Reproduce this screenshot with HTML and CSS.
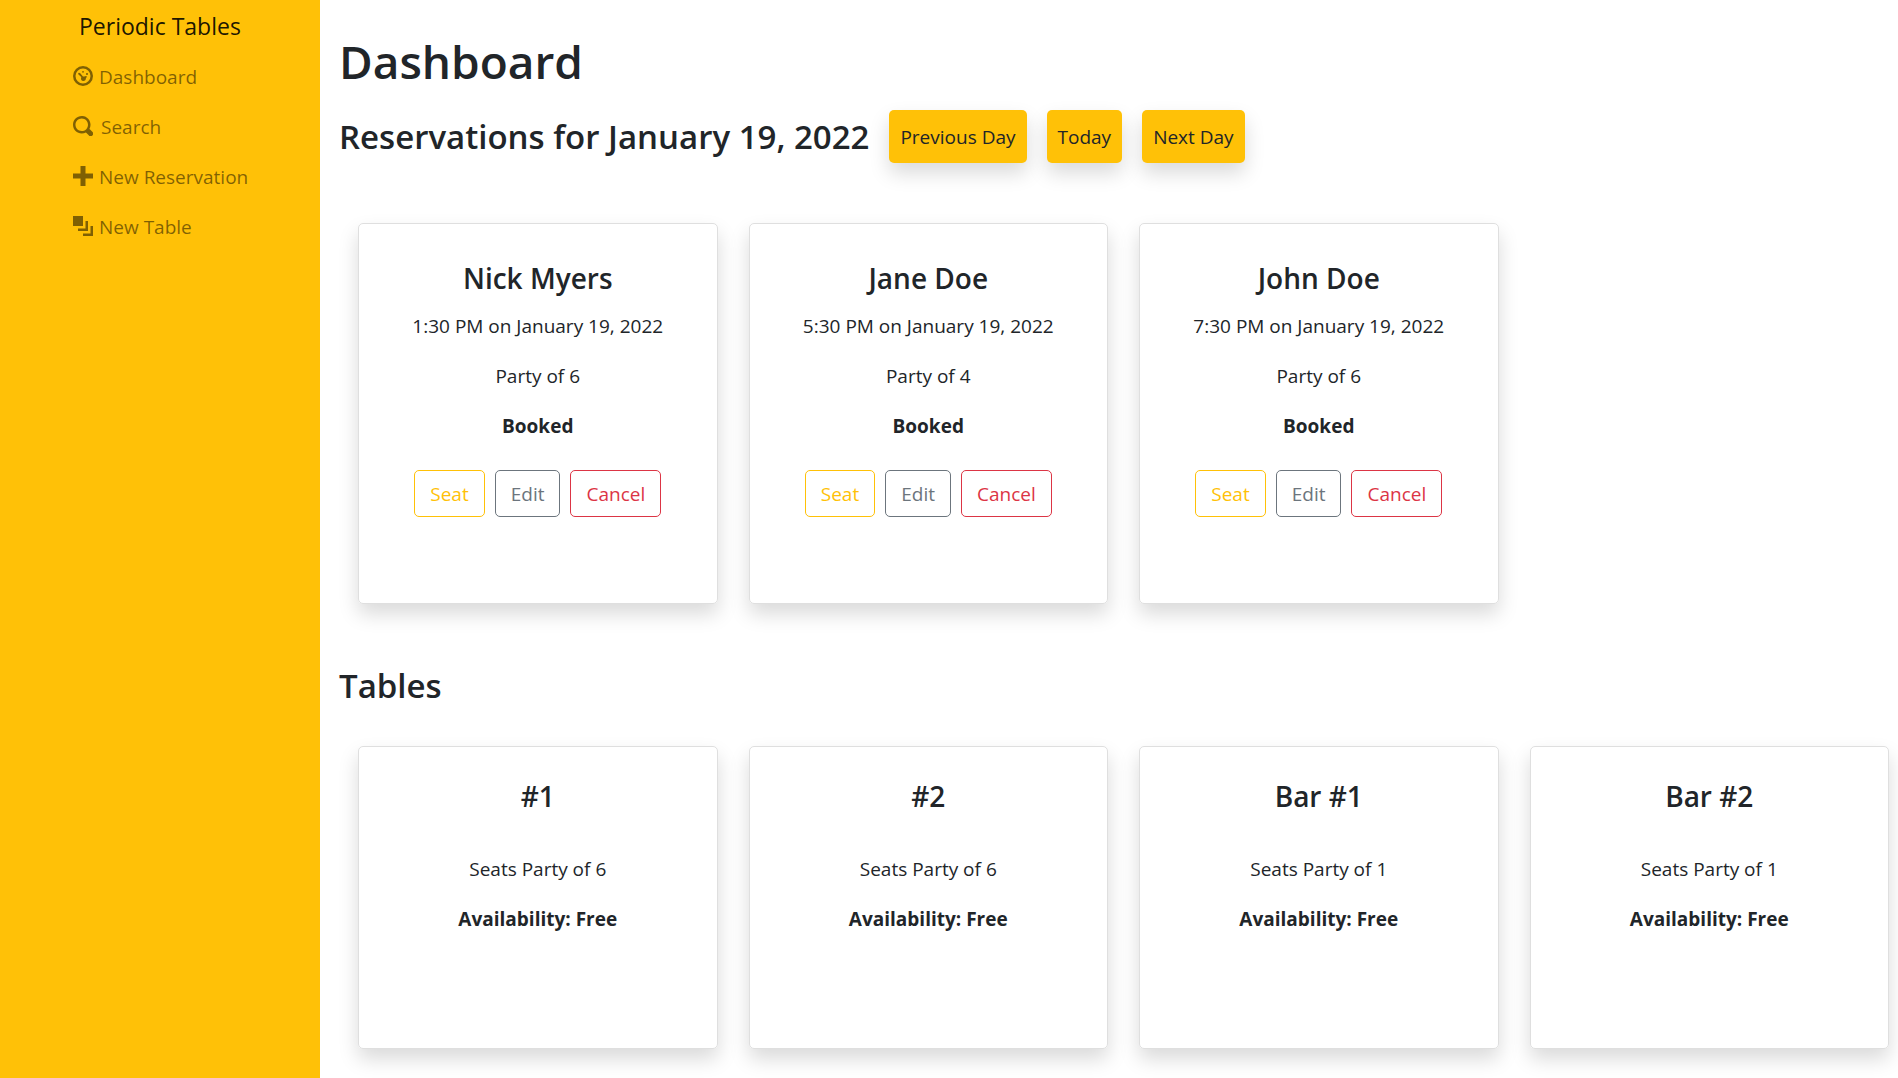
FILE: index.html
```html
<!DOCTYPE html>
<html lang="en">
<head>
<meta charset="utf-8">
<meta name="viewport" content="width=device-width, initial-scale=1">
<title>Periodic Tables</title>
<link rel="stylesheet" href="styles.css">
</head>
<body>
<div class="layout">
  <nav class="sidebar">
    <a class="brand" href="#">Periodic Tables</a>
    <ul class="menu">
      <li><a class="menu-link" href="#"><svg class="icon" viewBox="0 0 8 8" aria-hidden="true"><circle cx="4" cy="4" r="3.5" fill="none" stroke="currentColor" stroke-width="1"/><circle cx="4" cy="2.3" r=".35"/><circle cx="5.6" cy="3.2" r=".42"/><path d="M2.3 2.7c-.35.2-.3.5-.1.7l1.1 1c-.3 1 .1 1.6.85 1.6.65 0 1-.45 1-1 0-.3.5-.6.3-.95-.3-.25-.75.15-1 .1-.25 0-.3 0-.45.05l-1.1-1.35c-.15-.15-.4-.25-.6-.15z"/></svg>Dashboard</a></li>
      <li><a class="menu-link menu-link-search" href="#"><svg class="icon" viewBox="0 0 8 8" aria-hidden="true"><path d="M3.5 0c-1.93 0-3.5 1.57-3.5 3.5s1.57 3.5 3.5 3.5c.59 0 1.17-.14 1.66-.41a1 1 0 0 0 .13.13l1 1a1.02 1.02 0 1 0 1.44-1.44l-1-1a1 1 0 0 0-.16-.13c.27-.49.44-1.06.44-1.66 0-1.93-1.55-3.5-3.5-3.5zm.03 1c1.39 0 2.47 1.1 2.47 2.5 0 .66-.24 1.27-.66 1.72l-.03.03a1 1 0 0 0-.13.13c-.44.4-1.04.63-1.69.63-1.39 0-2.5-1.11-2.5-2.5s1.11-2.5 2.5-2.5z"/></svg>Search</a></li>
      <li><a class="menu-link" href="#"><svg class="icon" viewBox="0 0 8 8" aria-hidden="true"><path d="M3 0v3h-3v2h3v3h2v-3h3v-2h-3v-3h-2z"/></svg>New Reservation</a></li>
      <li><a class="menu-link" href="#"><svg class="icon" viewBox="0 0 8 8" aria-hidden="true"><path d="M0 0v4h4v-4h-4zm5 2v3h-3v1h4v-4h-1zm2 2v3h-3v1h4v-4h-1z"/></svg>New Table</a></li>
    </ul>
  </nav>
  <main class="content">
    <h1>Dashboard</h1>
    <div class="day-bar">
      <h2>Reservations for January 19, 2022</h2>
      <button class="day-button" type="button">Previous Day</button>
      <button class="day-button" type="button">Today</button>
      <button class="day-button" type="button">Next Day</button>
    </div>
    <section class="cards" aria-label="Reservations">
      <article class="card reservation">
        <h3>Nick Myers</h3>
        <p>1:30 PM on January 19, 2022</p>
        <p>Party of 6</p>
        <p class="status">Booked</p>
        <div class="actions">
          <button class="action seat" type="button">Seat</button>
          <button class="action edit" type="button">Edit</button>
          <button class="action cancel" type="button">Cancel</button>
        </div>
      </article>
      <article class="card reservation">
        <h3>Jane Doe</h3>
        <p>5:30 PM on January 19, 2022</p>
        <p>Party of 4</p>
        <p class="status">Booked</p>
        <div class="actions">
          <button class="action seat" type="button">Seat</button>
          <button class="action edit" type="button">Edit</button>
          <button class="action cancel" type="button">Cancel</button>
        </div>
      </article>
      <article class="card reservation">
        <h3>John Doe</h3>
        <p>7:30 PM on January 19, 2022</p>
        <p>Party of 6</p>
        <p class="status">Booked</p>
        <div class="actions">
          <button class="action seat" type="button">Seat</button>
          <button class="action edit" type="button">Edit</button>
          <button class="action cancel" type="button">Cancel</button>
        </div>
      </article>
    </section>
    <h2 class="tables-title">Tables</h2>
    <section class="cards" aria-label="Tables">
      <article class="card table-card">
        <h3>#1</h3>
        <p>Seats Party of 6</p>
        <p class="status">Availability: Free</p>
      </article>
      <article class="card table-card">
        <h3>#2</h3>
        <p>Seats Party of 6</p>
        <p class="status">Availability: Free</p>
      </article>
      <article class="card table-card">
        <h3>Bar #1</h3>
        <p>Seats Party of 1</p>
        <p class="status">Availability: Free</p>
      </article>
      <article class="card table-card">
        <h3>Bar #2</h3>
        <p>Seats Party of 1</p>
        <p class="status">Availability: Free</p>
      </article>
    </section>
  </main>
</div>
</body>
</html>
```
FILE: styles.css
```css
*, *::before, *::after { box-sizing: border-box; }

body {
  margin: 0;
  background: #fff;
  color: #212529;
  font-family: "Segoe UI", "Open Sans", "Noto Sans", sans-serif;
  font-size: 19px;
  line-height: 30px;
}

h1, h2, h3, p, ul { margin: 0; }
h1, h2, h3 { font-weight: 600; }
h1 { font-size: 46px; line-height: 60px; }
h2 { font-size: 33px; line-height: 42px; }
h3 { font-size: 28px; line-height: 36px; }
button { font: inherit; cursor: pointer; }

.layout { display: flex; min-height: 100vh; }

.sidebar {
  flex: 0 0 320px;
  padding: 5px 0 0 73px;
  background: #ffc107;
}

.brand {
  display: block;
  padding-left: 6px;
  color: rgba(0, 0, 0, 0.9);
  font-size: 23px;
  line-height: 42px;
  text-decoration: none;
}

.menu { padding: 5px 0 0; list-style: none; }

.menu-link {
  display: flex;
  align-items: center;
  gap: 6px;
  height: 50px;
  color: rgba(0, 0, 0, 0.5);
  text-decoration: none;
}

.menu-link-search { gap: 8px; }
.icon { width: 20px; height: 20px; margin-bottom: 2px; fill: currentColor; }

.content { flex: 1; min-width: 0; padding: 31px 9px 29px 19px; }

.day-bar {
  display: flex;
  flex-wrap: wrap;
  align-items: center;
  gap: 20px;
  margin: 19px 0 60px;
}

.day-button {
  min-height: 53px;
  padding: 11px;
  border: 0;
  border-radius: 5px;
  background: #ffc107;
  box-shadow: 0 10px 20px rgba(0, 0, 0, 0.15);
  color: #212529;
}

.cards {
  display: grid;
  grid-template-columns: repeat(4, 1fr);
  gap: 31px;
  padding-left: 19px;
}

.card {
  border: 1px solid #dfdfdf;
  border-radius: 5px;
  box-shadow: 0 10px 20px rgba(0, 0, 0, 0.15);
  text-align: center;
}

.card p + p { margin-top: 20px; }
.status { font-weight: 700; }

.reservation { padding: 36px 10px 86px; }
.reservation h3 { margin-bottom: 15px; }

.actions {
  display: flex;
  justify-content: center;
  gap: 10px;
  margin-top: 29px;
}

.action {
  padding: 9px 15px 7px;
  border: 1px solid currentColor;
  border-radius: 5px;
  background: transparent;
  line-height: 29px;
}

.seat { color: #ffc107; }
.edit { color: #6c757d; }
.cancel { color: #dc3545; }

.tables-title { margin: 61px 0 39px; }

.table-card { padding: 31px 10px 114px; }
.table-card h3 { margin-bottom: 40px; }
```
